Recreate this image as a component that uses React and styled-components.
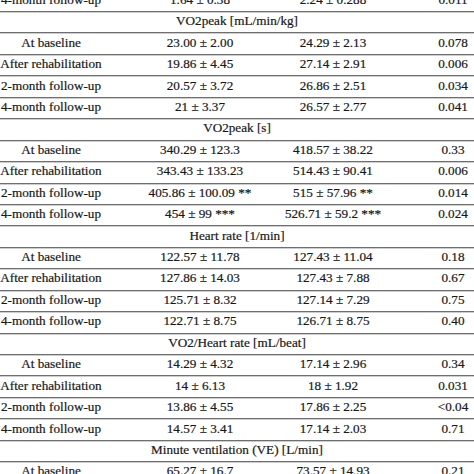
import React from 'react';
import styled, { createGlobalStyle } from 'styled-components';

const GlobalStyle = createGlobalStyle`
  html, body {
    margin: 0;
    padding: 0;
    background: #ffffff;
    overflow: hidden;
  }
  body {
    font-family: "Liberation Serif", "Times New Roman", serif;
    color: #181818;
  }
`;

// table is cropped: first row sits partly above the top edge
const TableStyles = styled.div`
  width: 474px;
  margin-top: -10.44px;
  display: flex;
  flex-direction: column;
  font-size: 13.2px;
  -webkit-text-stroke: 0.2px #181818;
`;

const Row = styled.div`
  height: 21.44px;
  box-sizing: border-box;
  border-top: 1px solid #6f6f6f;
  box-shadow: inset 0 1px 0 #cdcdcd;
  display: grid;
  grid-template-columns: 102px 196px 70px 1fr 42px;
  align-items: center;
  padding-bottom: 2px;
`;

const Cell = styled.div`
  display: flex;
  justify-content: center;
  white-space: nowrap;
  grid-column: ${(p) => p.col};
`;

const SectionRow = styled(Row)`
  grid-template-columns: 1fr;
`;

const SectionTitle = styled.div`
  text-align: center;
  white-space: nowrap;
`;

const sections = [
  {
    title: 'VO2peak [mL/min/kg]',
    rows: [
      ['At baseline', '23.00 ± 2.00', '24.29 ± 2.13', '0.078'],
      ['After rehabilitation', '19.86 ± 4.45', '27.14 ± 2.91', '0.006'],
      ['2-month follow-up', '20.57 ± 3.72', '26.86 ± 2.51', '0.034'],
      ['4-month follow-up', '21 ± 3.37', '26.57 ± 2.77', '0.041'],
    ],
  },
  {
    title: 'VO2peak [s]',
    rows: [
      ['At baseline', '340.29 ± 123.3', '418.57 ± 38.22', '0.33'],
      ['After rehabilitation', '343.43 ± 133.23', '514.43 ± 90.41', '0.006'],
      ['2-month follow-up', '405.86 ± 100.09 **', '515 ± 57.96 **', '0.014'],
      ['4-month follow-up', '454 ± 99 ***', '526.71 ± 59.2 ***', '0.024'],
    ],
  },
  {
    title: 'Heart rate [1/min]',
    rows: [
      ['At baseline', '122.57 ± 11.78', '127.43 ± 11.04', '0.18'],
      ['After rehabilitation', '127.86 ± 14.03', '127.43 ± 7.88', '0.67'],
      ['2-month follow-up', '125.71 ± 8.32', '127.14 ± 7.29', '0.75'],
      ['4-month follow-up', '122.71 ± 8.75', '126.71 ± 8.75', '0.40'],
    ],
  },
  {
    title: 'VO2/Heart rate [mL/beat]',
    rows: [
      ['At baseline', '14.29 ± 4.32', '17.14 ± 2.96', '0.34'],
      ['After rehabilitation', '14 ± 6.13', '18 ± 1.92', '0.031'],
      ['2-month follow-up', '13.86 ± 4.55', '17.86 ± 2.25', '<0.04'],
      ['4-month follow-up', '14.57 ± 3.41', '17.14 ± 2.03', '0.71'],
    ],
  },
  {
    title: 'Minute ventilation (VE) [L/min]',
    rows: [['At baseline', '65.27 ± 16.7', '73.57 ± 14.93', '0.21']],
  },
];

const DataRow = ({ cells }) => (
  <Row>
    <Cell col={1}>{cells[0]}</Cell>
    <Cell col={2}>{cells[1]}</Cell>
    <Cell col={3}>{cells[2]}</Cell>
    <Cell col={5}>{cells[3]}</Cell>
  </Row>
);

const App = () => {
  return (
    <>
      <GlobalStyle />
      <TableStyles>
        <DataRow cells={['4-month follow-up', '1.64 ± 0.38', '2.24 ± 0.288', '0.011']} />
        {sections.map((s) => (
          <React.Fragment key={s.title}>
            <SectionRow>
              <SectionTitle>{s.title}</SectionTitle>
            </SectionRow>
            {s.rows.map((r) => (
              <DataRow key={s.title + r[0]} cells={r} />
            ))}
          </React.Fragment>
        ))}
      </TableStyles>
    </>
  );
};

export default App;
